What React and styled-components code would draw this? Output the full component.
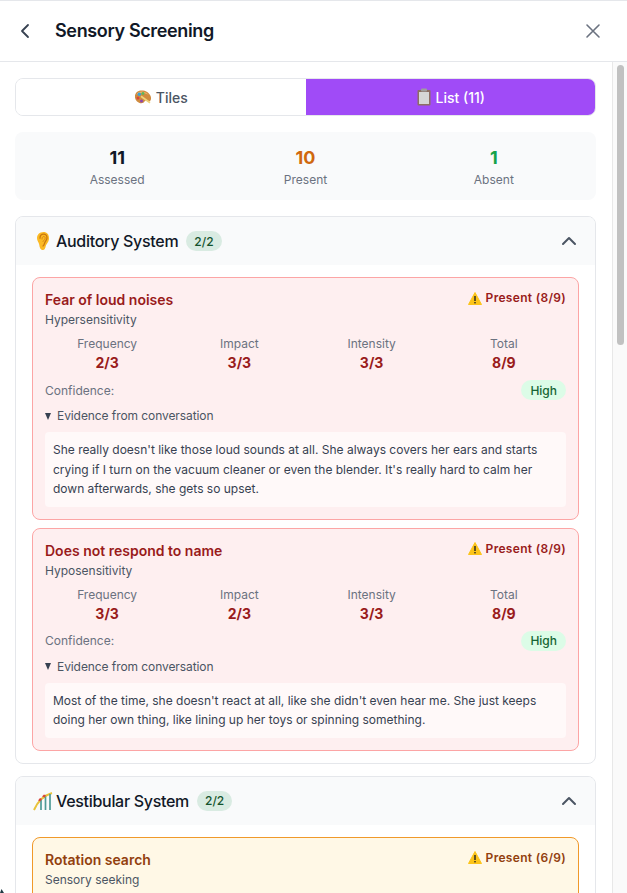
import React from "react";
import styled, { createGlobalStyle } from "styled-components";

const Global = createGlobalStyle`
  html, body { margin: 0; padding: 0; height: 100%; overflow: hidden; background: #fff; }
  body { font-family: Inter, "Noto Sans", sans-serif; color: #111827; }
  * { box-sizing: border-box; }
`;

const Page = styled.div`
  width: 627px; height: 893px; display: flex; flex-direction: column; background: #fff;
  border-top: 1px solid #e5e7eb; position: relative; overflow: hidden;
`;
const Header = styled.header`
  height: 61px; flex: none; display: flex; align-items: center; justify-content: space-between;
  padding: 0 22px 0 13px; border-bottom: 1px solid #e5e7eb;
`;
const HeaderLeft = styled.div`display: flex; align-items: center; gap: 18px;`;
const Title = styled.h1`margin: 0; font-size: 18px; line-height: 28px; font-weight: 600; letter-spacing: -0.36px; color: #111827;`;
const IconButton = styled.span`display: flex; color: ${p => p.$color || "#374151"};`;
const Body = styled.div`flex: 1; min-height: 0; display: flex;`;
const Scroller = styled.main`flex: 1; min-width: 0; overflow: hidden;`;
const Rail = styled.div`flex: none; width: 15px; background: #fafafa; border-left: 1px solid #e8e8e8; padding: 3px 3px 0 4px;`;
const RailThumb = styled.div`height: 280px; background: #c1c1c1; border-radius: 4px;`;
const Content = styled.div`padding: 16px 16px 16px 15px; display: flex; flex-direction: column; gap: 16px;`;
const Tabs = styled.div`display: flex; height: 38px; border: 1px solid #e5e7eb; border-radius: 8px; overflow: hidden; flex: none;`;
const Tab = styled.div`
  flex: 1; display: flex; align-items: center; justify-content: center; gap: 4px; font-size: 14px; font-weight: 500;
  color: ${p => p.$active ? "#fff" : "#4b5563"}; background: ${p => p.$active ? "#a04bf7" : "#fff"};
`;
const Stats = styled.div`
  flex: none; display: grid; grid-template-columns: repeat(3, 1fr); height: 68px; padding: 16px 8px 12px; background: #f9fafb; border-radius: 8px;
`;
const Stat = styled.div`display: flex; flex-direction: column; align-items: center;`;
const StatValue = styled.div`font-size: 18px; line-height: 20px; font-weight: 700; color: ${p => p.$color};`;
const StatLabel = styled.div`font-size: 12px; line-height: 16px; margin-top: 4px; color: #6b7280;`;
const SectionList = styled.div`display: flex; flex-direction: column; gap: 12px;`;
const Section = styled.section`flex: none; border: 1px solid #e5e7eb; border-radius: 8px; overflow: hidden; background: #fff;`;
const SectionHead = styled.div`
  height: 48px; background: #f9fafb; display: flex; align-items: center; justify-content: space-between; padding: 0 14px 0 16px;
`;
const SectionTitle = styled.div`display: flex; align-items: center; font-size: 16px; font-weight: 500; letter-spacing: -0.3px; color: #111827;`;
const Emoji = styled.span`width: 21px; margin-right: 3px; display: flex; justify-content: center; flex: none;`;
const CountPill = styled.span`
  margin-left: 8px; height: 20px; padding: 0 8px; border-radius: 10px; background: #d9ebe2; color: #14532d; letter-spacing: 0;
  font-size: 12px; font-weight: 500; display: flex; align-items: center;
`;
const SectionBody = styled.div`padding: 12px 16px; display: flex; flex-direction: column; gap: 8px;`;
const Card = styled.article`
  border: 1px solid ${p => p.$tone === "red" ? "#fca5a5" : "#f0992a"};
  background: ${p => p.$tone === "red" ? "#feeff0" : "#fff8e6"};
  border-radius: 8px; padding: 12px;
`;
const CardTop = styled.div`display: flex; justify-content: space-between; align-items: flex-start;`;
const CardTitle = styled.div`font-size: 14px; line-height: 20px; font-weight: 600; color: ${p => p.$color};`;
const CardKind = styled.div`font-size: 12px; line-height: 16px; margin-top: 2px; color: #4b5563;`;
const Status = styled.div`display: flex; align-items: center; gap: 4px; font-size: 12px; line-height: 16px; font-weight: 600; letter-spacing: 0.3px; color: ${p => p.$color};`;
const Scores = styled.div`display: grid; grid-template-columns: repeat(4, 1fr); gap: 8px; margin-top: 8px; text-align: center;`;
const ScoreLabel = styled.div`font-size: 12px; line-height: 16px; color: #6b7280;`;
const ScoreValue = styled.div`font-size: 14px; line-height: 20px; font-weight: 700; margin-top: 1px; color: ${p => p.$color};`;
const Confidence = styled.div`display: flex; justify-content: space-between; align-items: center; margin-top: 7px;`;
const ConfLabel = styled.span`font-size: 12px; color: #6b7280;`;
const ConfPill = styled.span`
  height: 20px; padding: 0 9px; border-radius: 10px; background: #dcfce7; color: #166534; font-size: 12px; font-weight: 500;
  display: flex; align-items: center;
`;
const EvidenceHead = styled.div`display: flex; align-items: center; gap: 3px; margin-top: 8px; font-size: 12px; line-height: 16px; letter-spacing: -0.08px; color: #4b5563;`;
const Caret = styled.span`width: 0; height: 0; border-left: 3.5px solid transparent; border-right: 3.5px solid transparent; border-top: 7px solid #374151; margin-right: 3px;`;
const Quote = styled.p`
  margin: 8px 0 0; padding: 8px; background: rgba(255,255,255,.6); border-radius: 4px; font-size: 12px; line-height: 19.5px; color: #374151;
`;
const CornerMark = styled.svg`position: absolute; left: 0; bottom: 0;`;

const Line = ({ d, size = 24, w = 2 }) => (
  <svg width={size} height={size} viewBox="0 0 24 24" fill="none" stroke="currentColor" strokeWidth={w} strokeLinecap="round" strokeLinejoin="round"><path d={d} /></svg>
);
const Palette = () => (
  <svg width="18" height="18" viewBox="0 0 18 18">
    <path d="M1 7.500C1.500 4 5 2 9 2.500c4.500.5 8.500 4.500 8 8.500-.3 2.500-2.500 3-4 2-1-.7-2-.5-2.500.5-.7 1.500-3 2.300-5.500 1.200C2 13.500.5 10.500 1 7.500z" fill="#cf8b3f" />
    <path d="M2.500 7c.5-2.300 3-3.800 6.500-3.300 3 .4 5 2 6 3.500-2-1.500-5-2.500-7.500-2.200C5.500 5.200 3.500 6 2.500 7z" fill="#e8b46c" />
    <circle cx="5.300" cy="6.300" r="1.700" fill="#3aa1d9" /><circle cx="9" cy="5.500" r="1.400" fill="#5cb85c" />
    <circle cx="4" cy="10" r="1.500" fill="#d9483b" /><circle cx="7.500" cy="13" r="1.500" fill="#8e44ad" />
    <path d="M7.500 7.500l9 6.500-1 1.500-9-6.500z" fill="#efd27a" />
  </svg>
);
const Clipboard = () => (
  <svg width="16" height="18" viewBox="0 0 16 18">
    <rect x="1.500" y="2" width="13" height="15.500" rx="1" fill="#8d6e63" />
    <rect x="3" y="4" width="10" height="12" fill="#d6d6d6" />
    <rect x="5" y=".5" width="6" height="3" rx="1" fill="#9e9e9e" />
  </svg>
);
const Ear = () => (
  <svg width="14" height="20" viewBox="0 0 14 20">
    <path d="M7.500 1C3.500 1 1 3.800 1 7.200c0 2.800 1.800 4 2.200 6.300C3.600 16.500 4.500 19 6.800 19c2 0 2.500-2 3-4 .5-2.200 3.200-3.800 3.200-7.800C13 3.500 11 1 7.500 1z" fill="#fbb924" />
    <path d="M4 7.200C4 4.800 5.600 3.200 7.600 3.200c2 0 3.400 1.700 3.400 3.900 0 2.200-2 3-2.500 5.200-.3 1.200-.7 2.200-1.500 2.700" fill="none" stroke="#c9780f" strokeWidth="1.300" strokeLinecap="round" />
    <path d="M6 8c0-1.400.7-2.500 1.800-2.500S9.300 6.500 9.100 7.600C8.900 8.800 7.600 9.200 7 10.500" fill="none" stroke="#d98a16" strokeWidth="1" strokeLinecap="round" />
  </svg>
);
const Coaster = () => (
  <svg width="20" height="20" viewBox="0 0 20 20">
    <path d="M1 19C4 12 9 5 19 2" fill="none" stroke="#e8c33c" strokeWidth="2" />
    <path d="M8 19V9M12.500 19V5.500M17 19V3" stroke="#4f9a96" strokeWidth="1.700" />
    <path d="M5 9.500l2-2.500 2 1-1.500 2.200zM9 5.500l2-2 2 1-1.500 2z" fill="#d9453a" />
  </svg>
);
const Warning = () => (
  <svg width="14" height="13" viewBox="0 0 14 13">
    <path d="M7 .5L13.500 12.500H.5z" fill="#fcc419" stroke="#fcc419" strokeLinejoin="round" />
    <rect x="6.300" y="4" width="1.400" height="5" fill="#222" /><rect x="6.300" y="10" width="1.400" height="1.400" fill="#222" />
  </svg>
);

const RED = "#991b1b";
const AMBER = "#92400e";

const Finding = ({ title, kind, scores, quote }) => (
  <Card $tone="red">
    <CardTop>
      <CardTitle $color={RED}>{title}</CardTitle>
      <Status $color={RED}><Warning />Present (8/9)</Status>
    </CardTop>
    <CardKind>{kind}</CardKind>
    <Scores>
      {[["Frequency", scores[0]], ["Impact", scores[1]], ["Intensity", scores[2]], ["Total", "8/9"]].map(([l, v]) => (
        <div key={l}><ScoreLabel>{l}</ScoreLabel><ScoreValue $color={RED}>{v}</ScoreValue></div>
      ))}
    </Scores>
    <Confidence><ConfLabel>Confidence:</ConfLabel><ConfPill>High</ConfPill></Confidence>
    <EvidenceHead><Caret />Evidence from conversation</EvidenceHead>
    <Quote>{quote}</Quote>
  </Card>
);

const SectionHeader = ({ icon, name }) => (
  <SectionHead>
    <SectionTitle><Emoji>{icon}</Emoji><span>{name}</span><CountPill>2/2</CountPill></SectionTitle>
    <IconButton $color="#4b5563"><Line d="M18 15l-6-6-6 6" /></IconButton>
  </SectionHead>
);

export default function App() {
  return (
    <Page>
      <Global />
      <Header>
        <HeaderLeft>
          <IconButton><Line d="M15 18l-6-6 6-6" w={1.8} /></IconButton>
          <Title>Sensory Screening</Title>
        </HeaderLeft>
        <IconButton $color="#6b7280"><Line d="M18 6L6 18M6 6l12 12" w={1.6} /></IconButton>
      </Header>
      <Body>
        <Scroller>
          <Content>
            <Tabs>
              <Tab><Palette />Tiles</Tab>
              <Tab $active><Clipboard />List (11)</Tab>
            </Tabs>
            <Stats>
              <Stat><StatValue $color="#111827">11</StatValue><StatLabel>Assessed</StatLabel></Stat>
              <Stat><StatValue $color="#d0680e">10</StatValue><StatLabel>Present</StatLabel></Stat>
              <Stat><StatValue $color="#16a34a">1</StatValue><StatLabel>Absent</StatLabel></Stat>
            </Stats>
            <SectionList>
              <Section>
                <SectionHeader icon={<Ear />} name="Auditory System" />
                <SectionBody>
                  <Finding title="Fear of loud noises" kind="Hypersensitivity" scores={["2/3", "3/3", "3/3"]}
                    quote="She really doesn't like those loud sounds at all. She always covers her ears and starts crying if I turn on the vacuum cleaner or even the blender. It's really hard to calm her down afterwards, she gets so upset." />
                  <Finding title="Does not respond to name" kind="Hyposensitivity" scores={["3/3", "2/3", "3/3"]}
                    quote="Most of the time, she doesn't react at all, like she didn't even hear me. She just keeps doing her own thing, like lining up her toys or spinning something." />
                </SectionBody>
              </Section>
              <Section>
                <SectionHeader icon={<Coaster />} name="Vestibular System" />
                <SectionBody>
                  <Card $tone="amber">
                    <CardTop>
                      <CardTitle $color={AMBER}>Rotation search</CardTitle>
                      <Status $color={AMBER}><Warning />Present (6/9)</Status>
                    </CardTop>
                    <CardKind>Sensory seeking</CardKind>
                  </Card>
                </SectionBody>
              </Section>
            </SectionList>
          </Content>
        </Scroller>
        <Rail><RailThumb /></Rail>
      </Body>
      <CornerMark width="4" height="4" viewBox="0 0 4 4"><path d="M0 4L1.500 0 4 4z" fill="#1f3a44" /></CornerMark>
    </Page>
  );
}
